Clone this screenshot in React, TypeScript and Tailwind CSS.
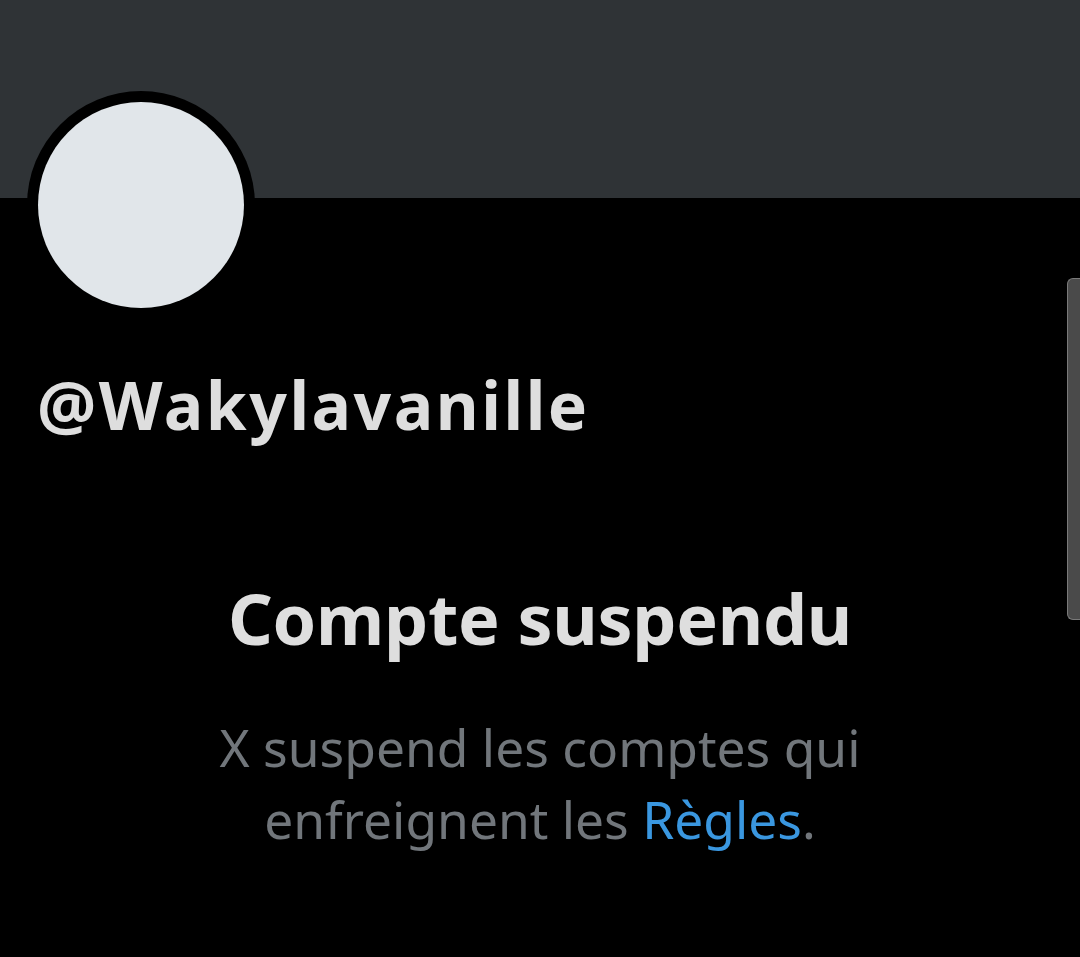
export default function App() {
  return (
    <div className="relative w-[1080px] h-[957px] bg-black overflow-hidden" style={{ fontFamily: '"Noto Sans", "Open Sans", sans-serif' }}>
      <div className="h-[198px] bg-[#2f3336]" />
      <div className="absolute left-[27px] top-[91px] w-[228px] h-[228px] rounded-full bg-black p-[11px]">
        <div className="w-full h-full rounded-full bg-[#e1e6ea]" />
      </div>
      <div className="pl-[37px] pt-[166px]">
        <div className="text-[66px] leading-[80px] font-bold tracking-[2.5px] text-[#dedede]">@Wakylavanille</div>
      </div>
      <div className="mt-[134px] flex flex-col items-center">
        <div className="text-[70px] leading-[80px] font-bold tracking-[-0.3px] text-[#dedede]">Compte suspendu</div>
        <div className="mt-[53px] text-[51.5px] leading-[72px] text-[#71767b] text-center w-[720px]">
          X suspend les comptes qui enfreignent les <span className="text-[#3a97e0]">Règles</span>.
        </div>
      </div>
      <div className="absolute right-0 top-[278px] w-[13px] h-[342px] rounded-l-[6px] bg-[#4a4a4a] border border-r-0 border-[#7a7a7a]" />
    </div>
  );
}
